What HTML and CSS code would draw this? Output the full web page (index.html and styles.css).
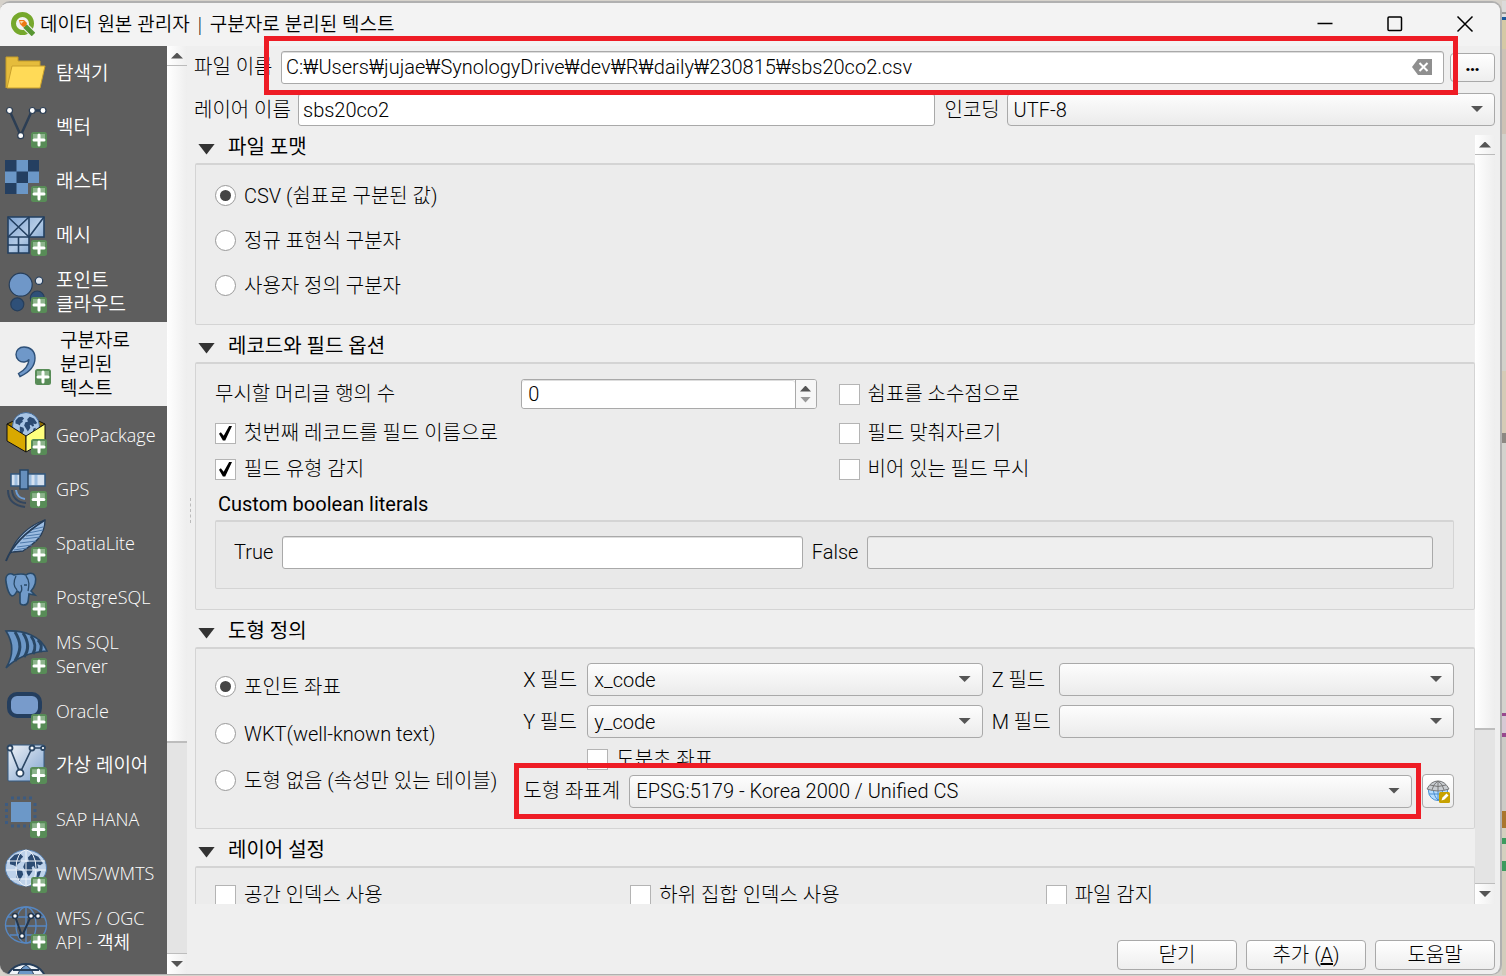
FILE: index.html
```html
<!DOCTYPE html>
<html lang="ko">
<head>
<meta charset="utf-8">
<title>데이터 원본 관리자</title>
<link rel="stylesheet" href="styles.css">
</head>
<body>
<svg class="defs" aria-hidden="true">
  <defs>
    <linearGradient id="pale" x1="0" y1="0" x2="1" y2="1"><stop offset="0" stop-color="#f0f3f7"/><stop offset="1" stop-color="#7fa3cf"/></linearGradient>
    <linearGradient id="mesh" x1="0" y1="0" x2="1" y2="1"><stop offset="0" stop-color="#7ea3d0"/><stop offset=".5" stop-color="#b4cbe6"/><stop offset="1" stop-color="#6b95c6"/></linearGradient>
    <symbol id="plus" viewBox="0 0 16 16"><rect width="16" height="16" rx="2.500" fill="#588c57"/><path d="M2 2h12v5H2z" fill="#8db48c"/><path d="M8 3v10M3 8h10" stroke="#fff" stroke-width="3" stroke-linecap="round"/></symbol>
    <symbol id="land" viewBox="0 0 42 36"><path d="M4 9l5-5 6-1 3 3-3 3 1 2-4 3-1 3-3-2-4-1zM11 19l6 2 1 4-4 7-3-4zM23 7l4-4 7 3 5 7-3 2-3-1 1 4-3 1-2-3-2 1 1 4-4 6-3-5-3-5 2-5 4-1zM33 22l4-1-2 6-3 1z" fill="#2b4b73"/></symbol>
  </defs>
</svg>
<div class="desktop">
<div class="window">
  <header class="titlebar">
    <svg class="logo" viewBox="0 0 24 24"><circle cx="11.500" cy="11.500" r="9" fill="none" stroke="#76a82c" stroke-width="5"/><path d="M12 12l10 10" stroke="#f3f3f3" stroke-width="7"/><path d="M14 14l8.500 8.500" stroke="#589632" stroke-width="5"/><path d="M8 8h5l3 3-1 3-3 1-3-3z" fill="#ee7913"/><path d="M9 9h4l-3 3z" fill="#f9d7a3"/></svg>
    <h1 class="title">데이터 원본 관리자 | 구분자로 분리된 텍스트</h1>
    <div class="controls">
      <button class="control" aria-label="최소화"><svg viewBox="0 0 18 18"><path d="M1.500 8.500h15" /></svg></button>
      <button class="control" aria-label="최대화"><svg viewBox="0 0 18 18"><rect x="2" y="2" width="13.500" height="13.500" rx="1"/></svg></button>
      <button class="control" aria-label="창 닫기"><svg viewBox="0 0 18 18"><path d="M1.500 1.500l15 15M16.500 1.500l-15 15"/></svg></button>
    </div>
  </header>
  <div class="body">
    <nav class="sidebar">
      <a class="item ko" href="#"><svg class="icon" viewBox="0 0 42 42"><path d="M1 36V5h12v4h22v5" fill="#e5bc3c" stroke="#c49c28"/><path d="M2 36L7 14h33l-5 22z" fill="#ffda57" stroke="#c9a02c"/></svg><span>탐색기</span></a>
      <a class="item ko" href="#"><svg class="icon" viewBox="0 0 42 42"><path d="M4.500 4.500l11.200 25L27 4.500h11" fill="none" stroke="#2c3e54" stroke-width="2.500"/><g fill="#fff" stroke="#2c3e54" stroke-width="1.200"><circle cx="4.500" cy="4.500" r="3"/><circle cx="15.700" cy="29.700" r="3"/><circle cx="27.300" cy="4.500" r="3"/><circle cx="38" cy="4.500" r="3"/></g><use href="#plus" x="26" y="26" width="16" height="16"/></svg><span>벡터</span></a>
      <a class="item ko" href="#"><svg class="icon" viewBox="0 0 42 42"><path d="M0 0h34v23H23v11H0z" fill="#6b97c7"/><path d="M0 0h11.500v11.500H0zM23 0h11v11.500H23zM11.500 11.500H23V23H11.500zM0 23h11.500v11H0z" fill="#243f61"/><use href="#plus" x="26" y="26" width="16" height="16"/></svg><span>래스터</span></a>
      <a class="item ko" href="#"><svg class="icon" viewBox="0 0 42 42"><g fill="url(#mesh)" stroke="#223f60" stroke-width="1.600"><path d="M3 3h21v20H3zM24 3h15v20H24zM3 23h21v16H3z"/><path d="M3 3l21 20M24 3L3 23M39 3L24 23M13.500 23v16M3 31h21" fill="none"/></g><use href="#plus" x="26" y="26" width="16" height="16"/></svg><span>메시</span></a>
      <a class="item ko" href="#"><svg class="icon" viewBox="0 0 42 42"><g stroke="#263e5b" stroke-width="1.200"><circle cx="15.700" cy="13.700" r="11.500" fill="#6f97c8"/><circle cx="34" cy="9.700" r="3.700" fill="#dbe4ef"/><circle cx="12.300" cy="33.300" r="6.500" fill="#2f5078"/><circle cx="32.300" cy="27" r="7" fill="#2f5078"/></g><use href="#plus" x="26" y="26" width="16" height="16"/></svg><span>포인트<br>클라우드</span></a>
      <a class="item ko selected" href="#" aria-current="page"><svg class="icon" viewBox="0 0 42 42"><path d="M15 4c-5 0-8 3.500-8 7.500 0 5 4 8 8.500 7.500 2-.3 3.500-1 4.500-2.500-.5 6-4 10.500-10.500 14l1.500 3C20 29.500 26 23 26 15 26 8 21.500 4 15 4z" fill="#6f98c9" stroke="#2d5078" stroke-width="1.400"/><use href="#plus" x="26" y="26" width="16" height="16"/></svg><span>구분자로<br>분리된<br>텍스트</span></a>
      <a class="item" href="#"><svg class="icon" viewBox="0 0 42 42"><path d="M2 10l19-9 19 9-19 12z" fill="#8b6b00" stroke="#111"/><circle cx="21" cy="12" r="13.500" fill="#a8c5e5" stroke="#446b98"/><use href="#land" x="8" y="0" width="26" height="24"/><path d="M2 10l19 12v16L2 27z" fill="#d9a900" stroke="#111"/><path d="M40 10L21 22v16l19-11z" fill="#ffff7d" stroke="#111"/><use href="#plus" x="26" y="25" width="16" height="16"/></svg><span>GeoPackage</span></a>
      <a class="item" href="#"><svg class="icon" viewBox="0 0 42 42"><path d="M6 6h34v12H6z" fill="#d5e1ef" stroke="#31577f" stroke-width="1.500"/><path d="M11 7v10M25 7v10M31 7v10" stroke="#9cbde0" stroke-width="3"/><path d="M15 2h8v19h-8z" fill="#668fbd" stroke="#274665" stroke-width="1.500"/><path d="M11 22q1 8 9 9" fill="none" stroke="#6d9ed6" stroke-width="2"/><path d="M7 22q1 12 14 13M3 22q0 15 17 17" fill="none" stroke="#33465e" stroke-width="2"/><use href="#plus" x="25" y="23" width="17" height="17"/></svg><span>GPS</span></a>
      <a class="item" href="#"><svg class="icon" viewBox="0 0 42 42"><path d="M40-2C25 3 11 15 5 31l3-1 10-1C28 22 40 15 40-2z" fill="#9dbde2" stroke="#263d58" stroke-width="1.300"/><path d="M38 5L25 8M38 8l-15 3M36 12l-15 2M35 15l-17 2M31 19l-16 2M27 23l-15 2M22 26l-13 2" stroke="#4d79aa"/><path d="M40-2C24 8 8 21 1 39" fill="none" stroke="#263d58" stroke-width="2"/><use href="#plus" x="26" y="25" width="16" height="16"/></svg><span>SpatiaLite</span></a>
      <a class="item" href="#"><svg class="icon" viewBox="0 0 42 42"><path d="M9-1C4-4 0-1 1 6c1 6 3 13 6 14 2 0 4-3 5-5l3 2v9c0 4 7 4 8 0l1-8 6 1-4-4c4-4 6-11 4-15-2-4-7-3-9-1-4-2-8-1-12 0z" fill="#719bca" stroke="#294967" stroke-width="1.600"/><path d="M11 0C8 6 9 11 12 14M21 0c4 5 3 10 2 15M15 17c3-3 1-8 1-8M19 9h3" fill="none" stroke="#294967" stroke-width="1.300"/><use href="#plus" x="26" y="25" width="16" height="16"/></svg><span>PostgreSQL</span></a>
      <a class="item" href="#"><svg class="icon" viewBox="0 0 42 42"><path d="M1-2c18-1 35 5 41 20-16 1-29 5-41 17C9 22 8 9 1-2z" fill="#6c97c7" stroke="#294765" stroke-width="1.600"/><path d="M10-1c7 11 6 19 0 29M18 0c6 9 6 17 1 24M26 3c5 7 5 12 2 18M33 7c4 4 4 7 2 12" fill="none" stroke="#294765" stroke-width="3"/><use href="#plus" x="26" y="25" width="16" height="16"/></svg><span>MS SQL<br>Server</span></a>
      <a class="item" href="#"><svg class="icon" viewBox="0 0 42 42"><rect x="4" y="4" width="31" height="22" rx="8" fill="#789bcb" stroke="#243e5e" stroke-width="4"/><use href="#plus" x="26" y="24" width="16" height="16"/></svg><span>Oracle</span></a>
      <a class="item ko" href="#"><svg class="icon" viewBox="0 0 42 42"><rect x="3" y="1" width="36" height="36" rx="1" fill="url(#pale)" stroke="#345a82"/><path d="M5 4l10 25L27 4h11" fill="none" stroke="#2b4663" stroke-width="1.600"/><g fill="#fff" stroke="#2b4663" stroke-width="1.800"><circle cx="5" cy="4" r="2.500"/><circle cx="15" cy="29" r="3.500"/><circle cx="27" cy="4" r="2.500"/><circle cx="38" cy="4" r="2"/></g><use href="#plus" x="25" y="23" width="17" height="17"/></svg><span>가상 레이어</span></a>
      <a class="item" href="#"><svg class="icon" viewBox="0 0 42 42"><path d="M6 4h20v20H6z" fill="#6c98c8"/><path d="M6 0h22M6 28h20M1.500 5v22M30 5v22" fill="none" stroke="#3d5b80" stroke-width="3" stroke-dasharray="3 3"/><use href="#plus" x="25" y="23" width="17" height="17"/></svg><span>SAP HANA</span></a>
      <a class="item" href="#"><svg class="icon" viewBox="0 0 42 42"><ellipse cx="21" cy="16" rx="20.500" ry="18" fill="#bed2ea" stroke="#5681b2"/><use href="#land" x="1" y="-1" width="40" height="34"/><g fill="none" stroke="#eef3f9"><path d="M21-2v36M2 9h38M1 18h40M5 27h32"/><ellipse cx="21" cy="16" rx="10" ry="18"/></g><use href="#plus" x="26" y="25" width="16" height="16"/></svg><span>WMS/WMTS</span></a>
      <a class="item" href="#"><svg class="icon" viewBox="0 0 42 42"><g fill="none" stroke="#5687c2" stroke-width="1.400"><ellipse cx="21" cy="16" rx="20.500" ry="18"/><ellipse cx="21" cy="16" rx="10" ry="18"/><path d="M21-2v36M2 8h38M1 17h40M5 26h32"/></g><path d="M10 7l7 20 9-20h7" fill="none" stroke="#23364d" stroke-width="2"/><g fill="#fff" stroke="#23364d" stroke-width="1.500"><circle cx="10" cy="7" r="2.500"/><circle cx="17" cy="27" r="2.500"/><circle cx="26" cy="7" r="2.500"/><circle cx="33" cy="7" r="2.500"/></g><use href="#plus" x="26" y="25" width="16" height="16"/></svg><span>WFS / OGC<br>API - 객체</span></a>
      <a class="item" href="#" aria-label="WCS"><svg class="icon" viewBox="0 0 42 42"><ellipse cx="21" cy="16" rx="20" ry="18" fill="#eef3f8" stroke="#263e5a" stroke-width="2"/><path d="M21-1q-9 5-10 17h20Q29 4 21-1z" fill="#6c98c8" stroke="#263e5a"/><path d="M8 4h26" stroke="#263e5a" stroke-width="2"/></svg></a>
    </nav>
    <div class="scrollbar side-scroll"><i class="step up"></i><i class="thumb"></i><i class="track"></i><i class="step down"></i></div>
    <div class="splitter"></div>
    <main class="main">
      <div class="file-row">
        <label class="file-label" for="file">파일 이름</label>
        <div class="file-box"><input id="file" class="field" type="text" value="C:₩Users₩jujae₩SynologyDrive₩dev₩R₩daily₩230815₩sbs20co2.csv"><button class="clear" aria-label="지우기"><svg viewBox="0 0 20 16"><path d="M6 0h14v16H6L0 8z" fill="#8f8f8f"/><path d="M7.500 4l8 8M15.500 4l-8 8" stroke="#fff" stroke-width="2"/></svg></button></div>
        <button class="push browse" aria-label="찾아보기">…</button>
        <div class="callout file-callout"></div>
      </div>
      <div class="layer-row">
        <label class="layer-label" for="layer">레이어 이름</label>
        <input id="layer" class="field layer-field" type="text" value="sbs20co2">
        <label class="encoding-label" for="enc">인코딩</label>
        <div class="combo encoding"><select id="enc"><option>UTF-8</option></select></div>
      </div>
      <div class="scroll-area">
        <div class="groups">
          <section>
            <h2 class="heading">파일 포맷</h2>
            <div class="frame format">
              <label class="choice"><input type="radio" name="format" checked>CSV (쉼표로 구분된 값)</label>
              <label class="choice"><input type="radio" name="format">정규 표현식 구분자</label>
              <label class="choice"><input type="radio" name="format">사용자 정의 구분자</label>
            </div>
          </section>
          <section>
            <h2 class="heading">레코드와 필드 옵션</h2>
            <div class="frame records">
              <div class="record-grid">
                <label for="skip">무시할 머리글 행의 수</label>
                <div class="spin"><input id="skip" class="field" type="text" value="0"><div class="spin-steps"><button class="spin-up" aria-label="증가"></button><button class="spin-down" aria-label="감소"></button></div></div>
                <label class="choice"><input type="checkbox">쉼표를 소수점으로</label>
                <label class="choice wide"><input type="checkbox" checked>첫번째 레코드를 필드 이름으로</label>
                <label class="choice"><input type="checkbox">필드 맞춰자르기</label>
                <label class="choice wide"><input type="checkbox" checked>필드 유형 감지</label>
                <label class="choice"><input type="checkbox">비어 있는 필드 무시</label>
              </div>
              <h3 class="subheading">Custom boolean literals</h3>
              <div class="frame literals">
                <label for="true">True</label><input id="true" class="field true-field" type="text">
                <label for="false">False</label><input id="false" class="field false-field" type="text" disabled>
              </div>
            </div>
          </section>
          <section>
            <h2 class="heading">도형 정의</h2>
            <div class="frame geometry">
              <div class="geometry-types">
                <label class="choice"><input type="radio" name="geom" checked>포인트 좌표</label>
                <label class="choice"><input type="radio" name="geom">WKT(well-known text)</label>
                <label class="choice"><input type="radio" name="geom">도형 없음 (속성만 있는 테이블)</label>
              </div>
              <div class="geometry-fields">
                <div class="xy-grid">
                  <label for="x">X 필드</label><div class="combo"><select id="x"><option>x_code</option></select></div>
                  <label for="z">Z 필드</label><div class="combo"><select id="z"><option></option></select></div>
                  <label for="y">Y 필드</label><div class="combo"><select id="y"><option>y_code</option></select></div>
                  <label for="m">M 필드</label><div class="combo"><select id="m"><option></option></select></div>
                </div>
                <label class="choice dms"><input type="checkbox">도분초 좌표</label>
                <div class="crs-row">
                  <label class="crs-label" for="crs">도형 좌표계</label>
                  <div class="combo crs"><select id="crs"><option>EPSG:5179 - Korea 2000 / Unified CS</option></select></div>
                  <button class="push crs-button" aria-label="좌표계 선택"><svg viewBox="0 0 24 24"><circle cx="12" cy="12" r="9.500" fill="#b5dcff" stroke="#4a8fd0"/><path d="M12 8v13M7 9q1 9 5 12M17 9q-1 9-5 12M3 15h18" fill="none" stroke="#4a8fd0"/><path d="M1 10Q5 2 12 2t11 8q-11 4-22 0z" fill="#c9cdd1" stroke="#777"/><path d="M12 2v10M12 2Q7 5 6 11M12 2q5 3 6 9M4 6q8 3 16 0" fill="none" stroke="#777"/><rect x="13" y="13" width="11" height="11" rx="1.500" fill="#c7a100"/><path d="M15.500 21.500l1-3 4-4 2 2-4 4z" fill="#fff"/></svg></button>
                  <div class="callout crs-callout"></div>
                </div>
              </div>
            </div>
          </section>
          <section>
            <h2 class="heading">레이어 설정</h2>
            <div class="frame settings">
              <label class="choice"><input type="checkbox">공간 인덱스 사용</label>
              <label class="choice"><input type="checkbox">하위 집합 인덱스 사용</label>
              <label class="choice"><input type="checkbox">파일 감지</label>
            </div>
          </section>
        </div>
        <div class="scrollbar main-scroll"><i class="step up"></i><i class="thumb"></i><i class="track"></i><i class="step down"></i></div>
      </div>
      <footer class="actions">
        <button class="push action">닫기</button>
        <button class="push action">추가 (<u>A</u>)</button>
        <button class="push action">도움말</button>
      </footer>
    </main>
  </div>
</div>
<div class="map-edge"></div>
</div>
</body>
</html>
```
FILE: styles.css
```css
* { box-sizing: border-box; }
body {
  margin: 0;
  background: #d6d2cb;
  color: #000;
  font: 300 20px/24px Roboto, "Noto Sans CJK KR", sans-serif;
}
button, input, select { font: inherit; color: inherit; margin: 0; }
.defs { position: absolute; width: 0; height: 0; }

.desktop { display: flex; height: 100vh; padding: 1px 0; }
.window {
  flex: 1;
  min-width: 0;
  display: flex;
  flex-direction: column;
  border: solid #b0b0b0;
  border-width: 2px 2px 1px 0;
  border-radius: 10px;
  background: #efefef;
  overflow: hidden;
}
.map-edge {
  width: 4px;
  background: linear-gradient(#dcdbda 11px, #999 11px 13px, #ddd 13px 16px, #1b589c 16px 19px, #d5c9a5 19px 48px, #cdc2b5 48px 133px, #d2d1ca 133px 370px, #d5cbb6 370px 432px, #8c8882 432px 442px, #d3d2cd 442px 712px, #98488e 712px 715px, #d7c8d4 715px 732px, #98488e 732px 736px, #cccbc6 736px 810px, #aa762e 810px 827px, #d4d0bf 827px 837px, #3c9b5e 837px 843px, #d4d0bf 843px 860px, #3c9b5e 860px 870px, #d2cdbc 870px);
}

.titlebar { display: flex; align-items: center; height: 43px; padding: 0 0 2px 11px; background: #f3f3f3; }
.logo { width: 24px; height: 24px; }
.title { flex: 1; margin: 0 0 0 5px; font: 350 19px/24px "Open Sans", "Noto Sans CJK KR", sans-serif; }
.controls { display: flex; }
.control { width: 70px; height: 40px; padding: 0; border: 0; background: none; }
.control svg { display: block; width: 18px; height: 18px; margin: auto; fill: none; stroke: #000; stroke-width: 1.5; }

.body { flex: 1; min-height: 0; display: flex; }
.sidebar {
  width: 167px;
  overflow: hidden;
  background: #5e5e5e;
  font: 350 18px/24px "Open Sans", "Noto Sans CJK KR", sans-serif;
}
.item { display: flex; align-items: center; gap: 9px; min-height: 54px; padding: 6px 0 6px 5px; color: #fff; text-decoration: none; white-space: nowrap; }
.item.ko { font-size: 19px; }
.item.selected { margin-bottom: 2px; padding-left: 9px; background: #efefef; color: #000; }
.icon { flex: none; width: 42px; height: 42px; overflow: visible; }

.scrollbar { flex: none; width: 20px; display: flex; flex-direction: column; background: linear-gradient(90deg, #fff, #eee); }
.step { display: flex; align-items: center; justify-content: center; height: 20px; }
.step::before { content: ""; width: 12px; height: 6px; background: #555; clip-path: polygon(50% 0, 100% 100%, 0 100%); }
.step.up { border-bottom: 1px solid #bbb; }
.step.down::before { transform: rotate(180deg); }
.side-scroll .thumb { flex: 677; }
.side-scroll .track { flex: 211; }
.main-scroll .thumb { flex: 575; }
.main-scroll .track { flex: 154; }
.track { border: solid #bdbdbd; border-width: 2px 0 1px; background: #e4e4e4; }
.splitter { width: 7px; display: flex; align-items: center; justify-content: center; }
.splitter::before { content: ""; height: 25px; border-left: 1px dashed #bbb; }

.main { flex: 1; min-width: 0; display: flex; flex-direction: column; padding: 5px 5px 4px 0; }
.field { width: 100%; height: 33px; padding: 0 4px; border: 1px solid #a9a9a9; border-radius: 3px; background: #fff; box-shadow: inset 0 1px #ddd; }
.field:disabled { background: #efefef; }
.push { border: 1px solid #a9a9a9; border-radius: 4px; background: linear-gradient(#fff, #eee); padding: 0; }
.combo { position: relative; }
.combo select { display: block; width: 100%; height: 33px; padding: 0 30px 0 6px; appearance: none; border: 1px solid #a9a9a9; border-radius: 4px; background: linear-gradient(#fdfdfd, #ebebeb); }
.combo::after { content: ""; position: absolute; right: 12px; top: 13px; width: 12px; height: 6px; background: #555; clip-path: polygon(0 0, 100% 0, 50% 100%); pointer-events: none; }
.callout { position: absolute; border: 5px solid #ee1c25; pointer-events: none; }

.file-row { position: relative; display: flex; align-items: center; height: 32px; }
.file-label { width: 87px; }
.file-box { position: relative; flex: 1; }
.clear { position: absolute; right: 12px; top: 8px; width: 20px; height: 16px; padding: 0; border: 0; background: none; }
.clear svg { display: block; }
.browse { width: 45px; height: 29px; margin-left: 6px; padding-bottom: 6px; font-weight: 700; line-height: 16px; }
.file-callout { inset: -15px 37px -12px 70px; z-index: 1; }

.layer-row { display: flex; align-items: center; height: 33px; margin-top: 10px; }
.layer-label { width: 104px; }
.layer-field { flex: 626; min-width: 0; }
.encoding-label { width: 72px; padding-left: 10px; }
.encoding { flex: 488; }

.scroll-area { flex: 1; min-height: 0; display: flex; margin-top: 9px; overflow: hidden; }
.groups { flex: 1; min-width: 0; padding-left: 1px; }
section + section { margin-top: 9px; }
.heading { display: flex; align-items: center; gap: 13px; height: 28px; margin: 0; padding: 0 0 4px 3px; font-size: 20px; font-weight: 400; }
.heading::before { content: ""; width: 17px; height: 11px; margin-top: 4px; background: #333; clip-path: polygon(0 0, 100% 0, 50% 100%); }
.frame { border: 1px solid #d4d4d4; border-top-width: 2px; border-radius: 2px; background: #ececec; }

.choice { display: flex; align-items: center; gap: 8px; white-space: nowrap; }
.choice input { flex: none; display: flex; align-items: center; justify-content: center; width: 21px; height: 21px; appearance: none; border: 1px solid #b4b4b4; background: #fff; }
.choice input[type="radio"] { border-color: #999; border-radius: 50%; }
.choice input[type="radio"]:checked::before { content: ""; width: 11px; height: 11px; border-radius: 50%; background: #444; }
.choice input[type="checkbox"]:checked::before { content: ""; width: 13px; height: 15px; background: #000; clip-path: polygon(0 55%, 14% 45%, 36% 68%, 80% 0, 100% 4%, 48% 100%, 30% 100%); }

.format { padding: 8px 19px 16px; }
.format .choice { height: 45px; }
.records { padding: 15px 20px 20px 19px; }
.record-grid { display: grid; grid-template-columns: 306fr 317fr 615fr; grid-template-rows: 30px 48px 24px; align-items: center; }
.wide { grid-column: span 2; }
.spin { display: flex; margin-right: 22px; border: 1px solid #a9a9a9; border-radius: 3px; background: #fff; overflow: hidden; }
.spin .field { height: 28px; flex: 1; min-width: 0; border: 0; padding-left: 6px; }
.spin-steps { width: 21px; display: flex; flex-direction: column; align-items: center; justify-content: center; gap: 5px; border-left: 1px solid #a9a9a9; background: #f7f7f7; }
.spin-up, .spin-down { width: 11px; height: 6px; padding: 0; border: 0; background: #555; clip-path: polygon(50% 0, 100% 100%, 0 100%); }
.spin-down { background: #999; clip-path: polygon(0 0, 100% 0, 50% 100%); }
.subheading { margin: 11px 0 4px 3px; font-size: 20px; font-weight: 400; }
.literals { display: flex; align-items: center; gap: 9px; height: 69px; padding: 0 20px 6px 18px; background: #e9e9e9; }
.literals .field { min-width: 0; }
.true-field { flex: 520; }
.false-field { flex: 566; }

.geometry { display: flex; padding: 14px 20px 20px 19px; }
.geometry-types { flex: 308 1 0; }
.geometry-types .choice { height: 47px; }
.geometry-fields { flex: 930 1 0; min-width: 0; }
.xy-grid { display: grid; grid-template-columns: 64px 404fr 67px 395fr; row-gap: 9px; align-items: center; }
.xy-grid .combo:nth-of-type(odd) { margin-right: 9px; }
.dms { height: 22px; margin: 10px 0 4px 64px; }
.crs-row { position: relative; display: flex; align-items: center; height: 34px; }
.crs-label { width: 106px; }
.crs { flex: 1; }
.crs-button { display: flex; align-items: center; justify-content: center; width: 32px; height: 34px; margin-left: 10px; }
.crs-button svg { width: 24px; height: 24px; }
.crs-callout { inset: -11px 33px -11px -9px; }
.settings { display: grid; grid-template-columns: repeat(3, 1fr); padding: 15px 13px 20px 19px; }

.actions { display: flex; justify-content: flex-end; gap: 9px; padding-top: 36px; }
.action { width: 120px; height: 30px; }
```
